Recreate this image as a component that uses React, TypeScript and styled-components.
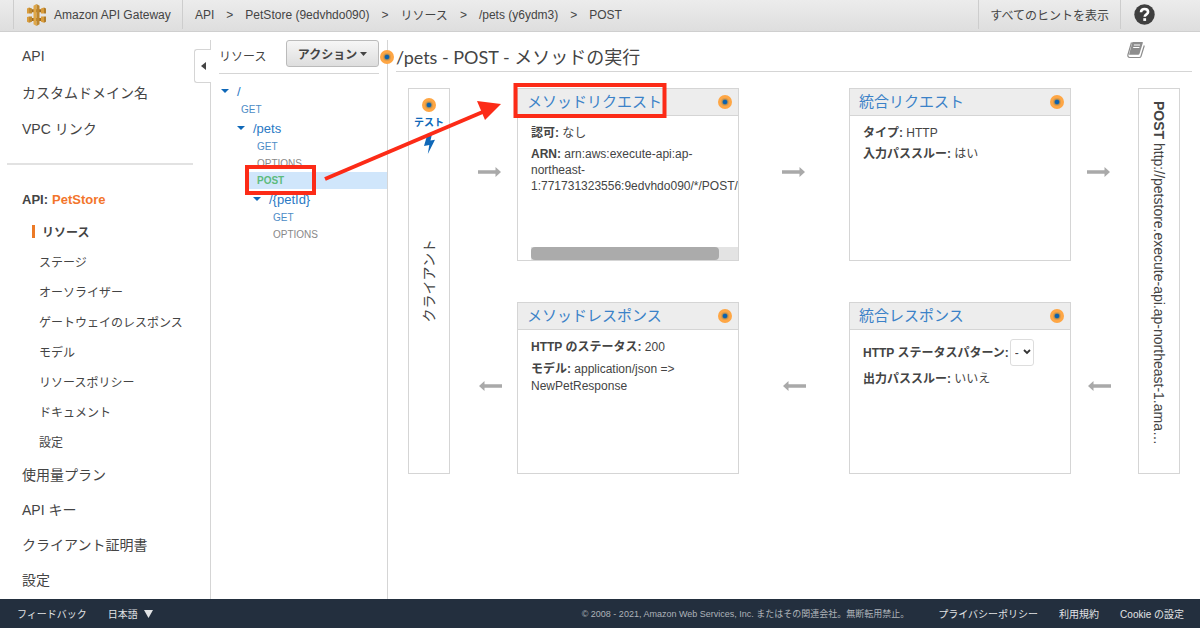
import React from "react";
import styled, { createGlobalStyle, css } from "styled-components";

const sans = `"Liberation Sans", "Noto Sans CJK JP", sans-serif`;
const line = "#d5d5d5";
const link = "#3b82c8";
const blue = "#0f68b8";

const GlobalStyle = createGlobalStyle`
  *, *::before, *::after { box-sizing: border-box; }
  body { margin: 0; background: #fff; color: #444; font-family: ${sans}; font-size: 12px; }
  a { color: inherit; text-decoration: none; }
  button, select { font-family: inherit; color: inherit; }
  h1, h2, p, ul, dl { margin: 0; padding: 0; font-weight: normal; }
  ul { list-style: none; }
`;

const Page = styled.div`
  position: relative;
  display: flex;
  flex-direction: column;
  min-height: 100vh;
`;

/* ---------- top bar ---------- */

const TopBar = styled.header`
  display: flex;
  height: 32px;
  padding-left: 13px;
  padding-bottom: 2px;
  background: linear-gradient(#ececec, #dedede);
  border-bottom: 1px solid #cfcfcf;
`;

const Brand = styled.a`
  display: flex;
  align-items: center;
  gap: 8px;
  width: 170px;
  padding-left: 13px;
  border-left: 1px solid #cdcdcd;
  border-right: 1px solid #cdcdcd;
`;

const Crumbs = styled.nav`
  display: flex;
  flex: 1;
  align-items: center;
  gap: 12px;
  padding-left: 12px;
  white-space: nowrap;
`;

const HintButton = styled.button`
  padding: 0 11px;
  border: 0;
  border-left: 1px solid #cdcdcd;
  border-right: 1px solid #cdcdcd;
  background: none;
  font-size: 12px;
`;

const HelpButton = styled.button`
  display: flex;
  align-items: center;
  justify-content: flex-start;
  width: 79px;
  padding: 0 0 0 13px;
  border: 0;
  background: none;
`;

/* ---------- body columns ---------- */

const Columns = styled.div`
  display: flex;
  flex: 1;
`;

const Sidebar = styled.nav`
  position: relative;
  width: 210px;
  flex-shrink: 0;
  padding: 6px 17px 0 7px;
`;

const CollapseTab = styled.button`
  position: absolute;
  top: 17px;
  right: -1px;
  display: flex;
  align-items: center;
  justify-content: center;
  width: 17px;
  height: 34px;
  padding: 0;
  border: 1px solid ${line};
  border-right: 0;
  border-radius: 3px 0 0 3px;
  background: #fff;
`;

const NavItem = styled.li<{ $height: number }>`
  display: flex;
  align-items: center;
  height: ${(p) => p.$height}px;
  padding-left: 15px;
  font-size: 14px;
`;

const Rule = styled.hr`
  height: 2px;
  margin: 17px 0;
  border: 0;
  background: #e2e2e2;
`;

const ApiHeading = styled.h2`
  display: flex;
  align-items: center;
  gap: 4px;
  height: 34px;
  padding-left: 15px;
  font-size: 13px;
  font-weight: bold;
`;

const ApiName = styled.a`
  color: #f3752b;
`;

const SubItem = styled.li<{ $current?: boolean }>`
  display: flex;
  align-items: center;
  height: 30px;
  padding-left: 32px;
  font-size: 12px;
  ${(p) =>
    p.$current &&
    css`
      padding-left: 25px;
      font-weight: bold;
      &::before {
        content: "";
        width: 3px;
        height: 13px;
        margin-right: 7px;
        background: #ec7a26;
      }
    `}
`;

const Resources = styled.section`
  width: 178px;
  flex-shrink: 0;
  margin-top: 8px;
  border-left: 1px solid ${line};
  border-right: 1px solid ${line};
`;

const ResourcesHead = styled.div`
  display: flex;
  align-items: flex-start;
  justify-content: space-between;
  height: 34px;
  margin: 0 8px 7px;
  border-bottom: 1px solid ${line};
`;

const ResourcesTitle = styled.h2`
  font-size: 12px;
  line-height: 34px;
`;

const ActionButton = styled.button`
  display: flex;
  align-items: center;
  justify-content: center;
  gap: 3px;
  width: 93px;
  height: 27px;
  padding: 0;
  border: 1px solid #bbb;
  border-radius: 3px;
  background: linear-gradient(#f6f6f6, #dedede);
  font-size: 12px;
  font-weight: bold;
`;

const Folder = styled.li<{ $depth: number }>`
  display: flex;
  align-items: center;
  gap: 8px;
  height: 20px;
  margin-left: ${(p) => 10 + p.$depth * 16}px;
  color: #2a79c4;
  font-size: 13px;
`;

const Method = styled.li<{ $depth: number; $kind?: "muted" | "selected" }>`
  display: flex;
  align-items: center;
  height: 17px;
  margin-left: ${(p) => 21 + p.$depth * 16}px;
  padding-left: 9px;
  font-size: 10px;
  color: ${(p) => (p.$kind === "muted" ? "#888" : "#4d8cc6")};
  ${(p) =>
    p.$kind === "selected" &&
    css`
      background: #d0e6fb;
      color: #5dbb7d;
      font-weight: bold;
    `}
`;

/* ---------- method execution ---------- */

const Main = styled.main`
  flex: 1;
  min-width: 0;
  padding: 8px 8px 0;
`;

const MainHead = styled.div`
  position: relative;
  display: flex;
  justify-content: space-between;
  height: 32px;
  border-bottom: 1px solid ${line};
`;

const Title = styled.h1`
  font-family: Lato, "Noto Sans CJK JP", sans-serif;
  font-size: 18px;
  line-height: 34px;
  white-space: nowrap;
`;

const TitleHint = styled.span`
  position: absolute;
  top: 10px;
  left: -16px;
  display: flex;
`;

const BookLink = styled.a`
  display: flex;
  align-items: flex-start;
  margin-right: 47px;
  padding-top: 1px;
`;

const Flow = styled.div`
  display: grid;
  grid-template-columns:
    42px minmax(0, 67fr) minmax(0, 222fr) minmax(0, 110fr)
    minmax(0, 222fr) minmax(0, 67fr) 42px;
  grid-template-rows: 173px 172px;
  row-gap: 41px;
  margin: 16px 12px 0;
`;

const EndBox = styled.div`
  grid-row: 1 / span 2;
  display: grid;
  grid-template-rows: minmax(0, 1fr) auto minmax(0, 1fr);
  justify-items: center;
  border: 1px solid ${line};
`;

const TestLink = styled.a`
  display: flex;
  flex-direction: column;
  align-items: center;
  padding-top: 9px;
  color: ${blue};
  font-size: 10px;
  font-weight: bold;
  line-height: 22px;
  white-space: nowrap;
`;

const ClientLabel = styled.span`
  writing-mode: vertical-rl;
  text-orientation: sideways;
  transform: rotate(180deg);
  font-size: 14px;
  line-height: 20px;
`;

const Endpoint = styled.div`
  grid-column: 7;
  grid-row: 1 / span 2;
  padding: 12px 0;
  border: 1px solid ${line};
  writing-mode: vertical-rl;
  text-orientation: sideways;
  font-size: 14px;
  line-height: 40px;
  white-space: nowrap;
  overflow: hidden;
`;

const ArrowCell = styled.div<{ $row: number; $col: number }>`
  grid-row: ${(p) => p.$row};
  grid-column: ${(p) => p.$col};
  display: flex;
  align-items: center;
  justify-content: center;
  padding-bottom: 5px;
  padding-left: ${(p) => (p.$col === 2 ? 12 : 0)}px;
  padding-right: ${(p) => (p.$col === 6 ? 12 : 0)}px;
`;

const Card = styled.section<{ $row: number; $col: number }>`
  grid-row: ${(p) => p.$row};
  grid-column: ${(p) => p.$col};
  display: flex;
  flex-direction: column;
  border: 1px solid ${line};
  background: #fff;
`;

const CardHead = styled.div`
  display: flex;
  align-items: center;
  justify-content: space-between;
  height: 27px;
  padding: 0 6px 0 9px;
  border-bottom: 1px solid ${line};
  background: #ededed;
`;

const CardTitle = styled.h2`
  color: ${link};
  font-size: 15px;
  line-height: 24px;
  white-space: nowrap;
`;

const CardBody = styled.div<{ $leading?: number }>`
  display: flex;
  flex: 1;
  flex-direction: column;
  gap: 5px;
  min-height: 0;
  margin-left: 13px;
  padding-top: 9px;
  overflow: hidden;
  line-height: ${(p) => p.$leading ?? 16}px;
`;

const StatusRow = styled.div`
  display: flex;
  align-items: center;
  gap: 1px;
  font-weight: bold;
  white-space: nowrap;
`;

const SelectWrap = styled.span`
  position: relative;
  display: flex;
  svg { position: absolute; top: 10px; right: 3px; pointer-events: none; }
`;

const StatusSelect = styled.select`
  width: 24px;
  height: 27px;
  padding: 0 0 0 4px;
  border: 1px solid #ddd;
  border-radius: 3px;
  background: #fff;
  font-size: 12px;
  appearance: none;
`;

const ScrollTrack = styled.div`
  height: 13px;
  margin-top: auto;
  flex-shrink: 0;
  background: #e3e3e3;
`;

const ScrollThumb = styled.div`
  width: 91%;
  height: 100%;
  border-radius: 4px;
  background: #ababab;
`;

/* ---------- footer and annotation ---------- */

const Footer = styled.footer`
  display: flex;
  align-items: center;
  justify-content: space-between;
  height: 29px;
  padding: 0 16px 0 17px;
  background: #232f3e;
  color: #e2e4e6;
  font-size: 10px;
  white-space: nowrap;
`;

const FooterGroup = styled.div`
  display: flex;
  align-items: center;
  gap: 21px;
`;

const LanguageButton = styled.button`
  display: flex;
  align-items: center;
  gap: 6px;
  padding: 0;
  border: 0;
  background: none;
  font-size: 10px;
`;

const Copyright = styled.span`
  margin-right: 8px;
  color: #aeb3b9;
  font-size: 9px;
`;

const Annotation = styled.svg`
  position: absolute;
  top: 80px;
  left: 240px;
  pointer-events: none;
`;

/* ---------- drawings ---------- */

const Logo = () => (
  <svg width="19" height="22" viewBox="0 0 19 22" aria-hidden="true">
    <path fill="#a06c22" d="M3 5.200h13v3H3zM3 14h13v3H3z" />
    <path fill="#d99c3c" d="M0 4.500l2-1v6H0zM0 13l2-.500v6.200l-2-1z" />
    <path fill="#c08a30" d="M2 3.500l3 1v5H2zM2 12.500h3v5.200l-3 1z" />
    <path fill="#d99c3c" d="M14 4.500l3-1v6h-3zM14 12.500h3v6.200l-3-1z" />
    <path fill="#b07c2a" d="M17 3.500l2 1v5h-2zM17 12.500h2v5.200l-2 1z" />
    <path fill="#e0a747" d="M6.500 1.800L9.500 0v22l-3-1.800z" />
    <path fill="#bd862e" d="M9.500 0l3 1.800v18.400l-3 1.800z" />
  </svg>
);

const HelpIcon = () => (
  <svg width="21" height="21" viewBox="0 0 21 21" aria-hidden="true">
    <circle cx="10.500" cy="10.500" r="10.200" fill="#3f3f3f" />
    <path
      d="M7 8.200C7 6 8.500 5 10.500 5s3.600 1.200 3.600 3c0 2.300-3.400 2.400-3.400 4.800"
      fill="none"
      stroke="#fff"
      strokeWidth="2.600"
    />
    <rect x="9.300" y="14.200" width="2.800" height="2.700" fill="#fff" />
  </svg>
);

const BookIcon = () => (
  <svg width="18" height="18" viewBox="0 0 18 18" aria-hidden="true">
    <path
      d="M4.500 1.500L1 13.500c-.500 1.800.3 3 1.800 3h9.400c.9 0 1.500-.4 1.800-1.300L17.300 4.500"
      fill="none"
      stroke="#8d8d8d"
      strokeWidth="1.200"
    />
    <path d="M5.400 1h9.600c.7 0 1 .5.800 1.100l-3.300 10.600c-.2.700-.7 1-1.400 1H2z" fill="#8d8d8d" />
    <path d="M6.900 4h6.200M6.200 6.500h6.200" stroke="#fff" strokeWidth="1.200" />
  </svg>
);

const HintDot = () => (
  <svg width="14" height="14" viewBox="0 0 14 14" aria-hidden="true">
    <circle cx="7" cy="7" r="7" fill="#fea644" />
    <circle cx="7" cy="7" r="4" fill="#dc9b4c" />
    <circle cx="7" cy="7" r="3" fill="#a08a5c" />
    <circle cx="7" cy="7" r="2.300" fill="#0d62ad" />
  </svg>
);

const Caret = ({ width = 7, color = "#444" }: { width?: number; color?: string }) => (
  <svg width={width} height="4" viewBox="0 0 8 4" preserveAspectRatio="none" aria-hidden="true">
    <path d="M0 0h8L4 4z" fill={color} />
  </svg>
);

const Bolt = () => (
  <svg width="11" height="20" viewBox="0 0 11 20" aria-hidden="true">
    <path d="M3.500 0H8L6.500 6.500 11 5.800 3.800 20l1.500-9L0 12z" fill={blue} />
  </svg>
);

const FlowArrow = ({ back = false }: { back?: boolean }) => (
  <svg width="24" height="10" viewBox="0 0 24 10" aria-hidden="true">
    <path
      d={back ? "M1 5l5.500-5v3.300H24v3.400H6.500V10z" : "M23 5l-5.500-5v3.300H0v3.400h17.500V10z"}
      fill="#a9a9a9"
    />
  </svg>
);

/* ---------- data ---------- */

const crumbs = ["API", "PetStore (9edvhdo090)", "リソース", "/pets (y6ydm3)", "POST"];
const topNav = ["API", "カスタムドメイン名", "VPC リンク"];
const apiNav = [
  "リソース",
  "ステージ",
  "オーソライザー",
  "ゲートウェイのレスポンス",
  "モデル",
  "リソースポリシー",
  "ドキュメント",
  "設定",
];
const bottomNav = ["使用量プラン", "API キー", "クライアント証明書", "設定"];

type TreeRow = { label: string; depth: number; folder?: boolean; kind?: "muted" | "selected" };
const tree: TreeRow[] = [
  { label: "/", depth: 0, folder: true },
  { label: "GET", depth: 0 },
  { label: "/pets", depth: 1, folder: true },
  { label: "GET", depth: 1 },
  { label: "OPTIONS", depth: 1, kind: "muted" },
  { label: "POST", depth: 1, kind: "selected" },
  { label: "/{petId}", depth: 2, folder: true },
  { label: "GET", depth: 2 },
  { label: "OPTIONS", depth: 2, kind: "muted" },
];

type StageProps = { title: string; row: number; col: number; leading?: number; children: React.ReactNode };
const Stage = ({ title, row, col, leading, children }: StageProps) => (
  <Card $row={row} $col={col}>
    <CardHead>
      <CardTitle><a href="#stage">{title}</a></CardTitle>
      <HintDot />
    </CardHead>
    <CardBody $leading={leading}>{children}</CardBody>
  </Card>
);

export default function App() {
  return (
    <Page lang="ja">
      <GlobalStyle />
      <TopBar>
        <Brand href="#home"><Logo />Amazon API Gateway</Brand>
        <Crumbs>
          {crumbs.map((c, i) => (
            <React.Fragment key={c}>
              {i > 0 && <span>&gt;</span>}
              <a href="#crumb">{c}</a>
            </React.Fragment>
          ))}
        </Crumbs>
        <HintButton>すべてのヒントを表示</HintButton>
        <HelpButton aria-label="ヘルプ"><HelpIcon /></HelpButton>
      </TopBar>

      <Columns>
        <Sidebar>
          <ul>
            {topNav.map((n) => (
              <NavItem key={n} $height={36}><a href="#nav">{n}</a></NavItem>
            ))}
          </ul>
          <Rule />
          <ApiHeading>API: <ApiName href="#api">PetStore</ApiName></ApiHeading>
          <ul>
            {apiNav.map((n, i) => (
              <SubItem key={n} $current={i === 0}><a href="#sub">{n}</a></SubItem>
            ))}
          </ul>
          <ul>
            {bottomNav.map((n) => (
              <NavItem key={n} $height={35}><a href="#nav">{n}</a></NavItem>
            ))}
          </ul>
          <CollapseTab aria-label="折りたたむ">
            <svg width="5" height="8" viewBox="0 0 5 8"><path d="M5 0v8L0 4z" fill="#444" /></svg>
          </CollapseTab>
        </Sidebar>

        <Resources>
          <ResourcesHead>
            <ResourcesTitle>リソース</ResourcesTitle>
            <ActionButton>アクション<Caret /></ActionButton>
          </ResourcesHead>
          <ul>
            {tree.map((r, i) =>
              r.folder ? (
                <Folder key={i} $depth={r.depth}>
                  <Caret width={8} color={blue} />
                  <a href="#resource">{r.label}</a>
                </Folder>
              ) : (
                <Method key={i} $depth={r.depth} $kind={r.kind}>
                  <a href="#method">{r.label}</a>
                </Method>
              )
            )}
          </ul>
        </Resources>

        <Main>
          <MainHead>
            <TitleHint><HintDot /></TitleHint>
            <Title>/pets - POST - メソッドの実行</Title>
            <BookLink href="#docs" aria-label="ドキュメント"><BookIcon /></BookLink>
          </MainHead>
          <Flow>
            <EndBox>
              <TestLink href="#test"><HintDot />テスト<Bolt /></TestLink>
              <ClientLabel>クライアント</ClientLabel>
            </EndBox>
            {[2, 4, 6].map((col) => (
              <React.Fragment key={col}>
                <ArrowCell $row={1} $col={col}><FlowArrow /></ArrowCell>
                <ArrowCell $row={2} $col={col}><FlowArrow back /></ArrowCell>
              </React.Fragment>
            ))}
            <Stage title="メソッドリクエスト" row={1} col={3}>
              <p><b>認可:</b> なし</p>
              <p>
                <b>ARN:</b> arn:aws:execute-api:ap-<br />northeast-<br />
                1:771731323556:9edvhdo090/*/POST/pets
              </p>
              <ScrollTrack><ScrollThumb /></ScrollTrack>
            </Stage>
            <Stage title="統合リクエスト" row={1} col={5}>
              <p><b>タイプ:</b> HTTP</p>
              <p><b>入力パススルー:</b> はい</p>
            </Stage>
            <Stage title="メソッドレスポンス" row={2} col={3} leading={17}>
              <p><b>HTTP のステータス:</b> 200</p>
              <p><b>モデル:</b> application/json =&gt; NewPetResponse</p>
            </Stage>
            <Stage title="統合レスポンス" row={2} col={5}>
              <StatusRow>
                <label htmlFor="status">HTTP ステータスパターン:</label>
                <SelectWrap>
                  <StatusSelect id="status"><option>-</option></StatusSelect>
                  <svg width="8" height="6" viewBox="0 0 8 6">
                    <path d="M1 1l3 3 3-3" fill="none" stroke="#333" strokeWidth="1.800" />
                  </svg>
                </SelectWrap>
              </StatusRow>
              <p><b>出力パススルー:</b> いいえ</p>
            </Stage>
            <Endpoint><b>POST</b> http://petstore.execute-api.ap-northeast-1.ama…</Endpoint>
          </Flow>
        </Main>
      </Columns>

      <Footer>
        <FooterGroup>
          <a href="#feedback">フィードバック</a>
          <LanguageButton>
            日本語
            <svg width="9" height="8" viewBox="0 0 9 8"><path d="M0 0h9L4.500 8z" fill="#e2e4e6" /></svg>
          </LanguageButton>
        </FooterGroup>
        <FooterGroup>
          <Copyright>© 2008 - 2021, Amazon Web Services, Inc. またはその関連会社。無断転用禁止。</Copyright>
          <a href="#privacy">プライバシーポリシー</a>
          <a href="#terms">利用規約</a>
          <a href="#cookie">Cookie の設定</a>
        </FooterGroup>
      </Footer>

      <Annotation width="430" height="120" viewBox="0 0 430 120" aria-hidden="true">
        <g fill="none" stroke="#fc2b17" strokeWidth="4">
          <rect x="7" y="87" width="67" height="26" />
          <rect x="275.500" y="5" width="149" height="31" />
          <path d="M85 99L245 31" />
        </g>
        <path d="M261 24L237 21l8 19z" fill="#fc2b17" />
      </Annotation>
    </Page>
  );
}
